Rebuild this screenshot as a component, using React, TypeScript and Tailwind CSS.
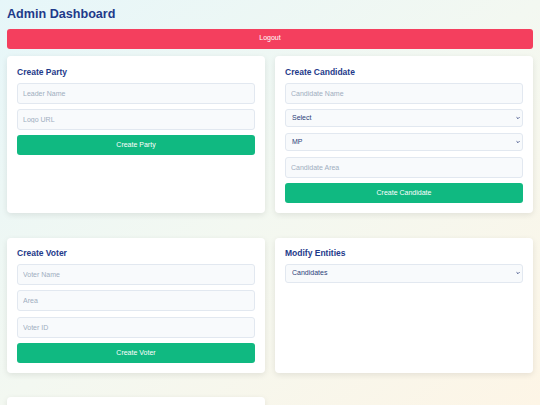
import React from "react";

const font = { fontFamily: '"Liberation Sans", Arial, sans-serif' };

function Input({ placeholder }: { placeholder: string }) {
  return (
    <input
      placeholder={placeholder}
      className="h-[21px] w-full rounded-[3px] border border-[#e2e8f0] bg-[#f8fafc] px-[5px] text-[7px] text-[#1e3a8a] placeholder:text-[#a0aec0] outline-none"
    />
  );
}

function Select({ options }: { options: string[] }) {
  return (
    <div className="relative">
      <select className="block h-[18.7px] w-full appearance-none rounded-[3px] border border-[#e2e8f0] bg-[#f8fafc] pl-[6px] text-[7px] text-[#2c3e7a] outline-none">
        {options.map((o) => (
          <option key={o}>{o}</option>
        ))}
      </select>
      <svg
        viewBox="0 0 6 4"
        className="pointer-events-none absolute top-1/2 right-[3px] h-[3px] w-[4px] -translate-y-1/2"
      >
        <path d="M0.7 0.7 L3 3 L5.3 0.7" fill="none" stroke="#2c3e7a" strokeWidth="1.3" />
      </svg>
    </div>
  );
}

function SubmitButton({ label }: { label: string }) {
  return (
    <button className="h-[20px] w-full rounded-[3px] bg-[#10b981] text-[7px] text-white">
      {label}
    </button>
  );
}

function Card({ title, children }: { title: string; children?: React.ReactNode }) {
  return (
    <div className="rounded-[4px] bg-white px-[10px] pt-[10.5px] pb-[10px] shadow-[0_2px_6px_rgba(0,0,0,0.09)]">
      <h2 className="mb-[5px] text-[8.5px] leading-[11px] font-bold text-[#1e3a8a]">{title}</h2>
      <div className="flex flex-col gap-[5.3px]">{children}</div>
    </div>
  );
}

export default function App() {
  return (
    <div
      className="min-h-screen bg-fixed bg-linear-to-br from-[#e6f6f9] via-[#f3f8f1] to-[#fdf5e6] px-[7px] pt-[6px] pb-[20px]"
      style={font}
    >
      <h1 className="text-[12.6px] leading-[16px] font-bold text-[#1e3a8a]">Admin Dashboard</h1>
      <button className="mt-[6.5px] h-[20px] w-full rounded-[3px] bg-[#f43f5e] text-[7px] text-white">
        Logout
      </button>

      <div className="mt-[7.5px] grid grid-cols-2 gap-x-[10px] gap-y-[24.5px]">
        <Card title="Create Party">
          <Input placeholder="Leader Name" />
          <Input placeholder="Logo URL" />
          <SubmitButton label="Create Party" />
        </Card>

        <Card title="Create Candidate">
          <Input placeholder="Candidate Name" />
          <Select options={["Select"]} />
          <Select options={["MP", "MLA"]} />
          <Input placeholder="Candidate Area" />
          <SubmitButton label="Create Candidate" />
        </Card>

        <Card title="Create Voter">
          <Input placeholder="Voter Name" />
          <Input placeholder="Area" />
          <Input placeholder="Voter ID" />
          <SubmitButton label="Create Voter" />
        </Card>

        <Card title="Modify Entities">
          <Select options={["Candidates", "Parties", "Voters"]} />
        </Card>

        <Card title="Results">
          <SubmitButton label="Show Results" />
        </Card>
      </div>
    </div>
  );
}
